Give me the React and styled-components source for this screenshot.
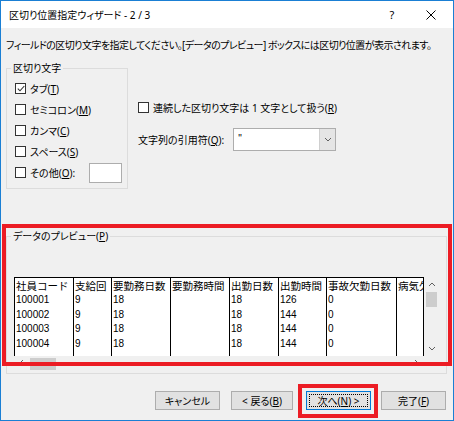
import React from 'react'
import styled, { createGlobalStyle } from 'styled-components'

const UI_FONT = `"Noto Sans", "Noto Sans CJK JP", sans-serif`

const GlobalStyle = createGlobalStyle`
  html, body {
    margin: 0;
    padding: 0;
    background: #f0f0f0;
  }
`

const Window = styled.div`
  width: 454px;
  height: 421px;
  box-sizing: border-box;
  border: 1px solid #1a7fd4;
  background: #f0f0f0;
  display: flex;
  flex-direction: column;
  font-family: ${UI_FONT};
  font-size: 10px;
  font-feature-settings: "palt";
  color: #000;
  overflow: hidden;
`

const TitleBar = styled.div`
  height: 27px;
  background: #fff;
  display: flex;
  align-items: center;
  padding-left: 8px;
  flex-shrink: 0;
`

const Title = styled.div`
  flex: 1;
  font-size: 10px;
`

const TitleButton = styled.div`
  width: ${p => p.w}px;
  height: 27px;
  display: flex;
  align-items: center;
  justify-content: center;
  font-size: 11px;
`

const Content = styled.div`
  padding: 0 5px 0 5px;
  display: flex;
  flex-direction: column;
`

const Instruction = styled.div`
  margin-top: 10px;
  line-height: 14px;
  white-space: nowrap;
  letter-spacing: -0.55px;
`

const TopRow = styled.div`
  display: flex;
  margin-top: 9px;
`

const GroupBox = styled.fieldset`
  margin: 0;
  padding: 0;
  border: 1px solid #dcdcdc;
  min-width: 0;
  box-sizing: border-box;
  width: ${p => p.width}px;
`

const Legend = styled.legend`
  padding: 0 2px;
  margin-left: 4px;
  line-height: 14px;
`

const OptionList = styled.div`
  padding: 3px 0 5px 8px;
  display: flex;
  flex-direction: column;
`

const OptionRow = styled.label`
  height: 21px;
  display: flex;
  align-items: center;
  gap: 4px;
  white-space: nowrap;
`

const Text = styled.span`
  white-space: nowrap;
`

const Box = styled.span`
  width: 9px;
  height: 9px;
  border: 1px solid #333;
  background: #fff;
  display: inline-flex;
  align-items: center;
  justify-content: center;
  flex-shrink: 0;
`

const Key = styled.span`
  text-decoration: underline;
`

const SmallInput = styled.div`
  width: 33px;
  height: 20px;
  box-sizing: border-box;
  border: 1px solid #adadad;
  background: #fff;
  margin-left: auto;
  margin-right: 5px;
`

const RightColumn = styled.div`
  margin-left: 10px;
  padding-top: 36px;
  display: flex;
  flex-direction: column;
`

const QuoteRow = styled.div`
  display: flex;
  align-items: center;
  margin-top: 10px;
  gap: 9px;
  white-space: nowrap;
`

const Combo = styled.div`
  width: 103px;
  height: 23px;
  box-sizing: border-box;
  border: 1px solid #adadad;
  background: #fff;
  display: flex;
`

const ComboValue = styled.div`
  flex: 1;
  padding-left: 4px;
  line-height: 19px;
  font-family: "Liberation Sans", sans-serif;
  font-size: 10px;
`

const ComboButton = styled.div`
  width: 15px;
  background: #e5e5e5;
  border-left: 1px solid #cfcfcf;
  display: flex;
  align-items: center;
  justify-content: center;
`

const PreviewWrap = styled.div`
  position: relative;
  margin-top: 40px;
  margin-right: 1px;
`

const Annotation = styled.div`
  position: absolute;
  left: ${p => p.l}px;
  top: ${p => p.t}px;
  right: ${p => p.r}px;
  bottom: ${p => p.b}px;
  border: 4px solid #ec1c24;
  pointer-events: none;
`

const PreviewControl = styled.div`
  margin: 0 7px 3px 7px;
  padding-top: 34px;
  display: grid;
  grid-template-columns: 410px 15px;
  grid-template-rows: 79px 14px;
`

const Viewport = styled.div`
  box-sizing: border-box;
  background: #fff;
  border-top: 1px solid #000;
  border-right: 1px solid #000;
  overflow: hidden;
  display: flex;
  font-family: "Liberation Sans", "Noto Sans CJK JP", sans-serif;
  font-feature-settings: normal;
`

const Column = styled.div`
  width: ${p => p.w}px;
  flex-shrink: 0;
  box-sizing: border-box;
  border-left: 1px solid #000;
  overflow: hidden;
  white-space: nowrap;
`

const HeaderCell = styled.div`
  height: 15px;
  line-height: 15px;
  font-family: "Noto Sans CJK JP", sans-serif;
  font-size: 10.5px;
  padding-left: 1px;
`

const DataCell = styled.div`
  height: 14.5px;
  line-height: 14.5px;
  font-size: 10px;
  padding-left: 1px;
`

const VScroll = styled.div`
  background: #f0f0f0;
  display: flex;
  flex-direction: column;
`

const ArrowButton = styled.div`
  width: ${p => p.w || 15}px;
  height: ${p => p.h || 15}px;
  display: flex;
  align-items: center;
  justify-content: center;
  flex-shrink: 0;
`

const VThumb = styled.div`
  height: 15px;
  margin: 0 2px;
  background: #cdcdcd;
`

const Spacer = styled.div`
  flex: 1;
`

const HScroll = styled.div`
  background: #f0f0f0;
  display: flex;
  align-items: flex-start;
`

const HThumb = styled.div`
  width: 26px;
  height: 12px;
  margin-top: 2px;
  margin-left: 1px;
  background: #cdcdcd;
`

const Corner = styled.div`
  background: #f0f0f0;
`

const ButtonRow = styled.div`
  display: flex;
  justify-content: flex-end;
  margin-top: 17px;
  margin-right: 2px;
`

const Button = styled.div`
  position: relative;
  width: ${p => p.w || 65}px;
  height: 19px;
  box-sizing: border-box;
  margin-left: ${p => p.gap || 0}px;
  border: 1px solid ${p => (p.primary ? '#0078d7' : '#adadad')};
  background: #e1e1e1;
  display: flex;
  align-items: center;
  justify-content: center;
  white-space: nowrap;
`

const FocusRing = styled.span`
  position: absolute;
  inset: 2px;
  border: 1px dotted #000;
`

const Check = ({ checked }) => (
  <Box>
    {checked && (
      <svg width="8" height="7" viewBox="0 0 8 7">
        <path d="M0.8 3.6 L3 5.8 L7.3 1" fill="none" stroke="#333" strokeWidth="1.1" />
      </svg>
    )}
  </Box>
)

const Chevron = ({ dir = 'down' }) => {
  const paths = {
    down: 'M1 1 L4 4 L7 1',
    up: 'M1 4 L4 1 L7 4',
    left: 'M4 1 L1 4 L4 7',
    right: 'M1 1 L4 4 L1 7',
  }
  const vertical = dir === 'up' || dir === 'down'
  return (
    <svg width={vertical ? 8 : 5} height={vertical ? 5 : 8} viewBox={vertical ? '0 0 8 5' : '0 0 5 8'}>
      <path d={paths[dir]} fill="none" stroke="#606060" strokeWidth="1" />
    </svg>
  )
}

const columns = [
  { w: 59, title: '社員コード', data: ['100001', '100002', '100003', '100004'] },
  { w: 38, title: '支給回', data: ['9', '9', '9', '9'] },
  { w: 59, title: '要勤務日数', data: ['18', '18', '18', '18'] },
  { w: 59, title: '要勤務時間', data: ['', '', '', ''] },
  { w: 49, title: '出勤日数', data: ['18', '18', '18', '18'] },
  { w: 48, title: '出勤時間', data: ['126', '144', '144', '144'] },
  { w: 70, title: '事故欠勤日数', data: ['0', '0', '0', '0'] },
  { w: 70, title: '病気欠勤日数', data: ['', '', '', ''] },
]

export default function App() {
  return (
    <>
      <GlobalStyle />
      <Window>
        <TitleBar>
          <Title>区切り位置指定ウィザード - 2 / 3</Title>
          <TitleButton w={34}>?</TitleButton>
          <TitleButton w={44}>
            <svg width="10" height="10" viewBox="0 0 10 10">
              <path d="M0.5 0.5 L9.5 9.5 M9.5 0.5 L0.5 9.5" stroke="#000" strokeWidth="1" />
            </svg>
          </TitleButton>
        </TitleBar>
        <Content>
          <Instruction>
            フィールドの区切り文字を指定してください。[データのプレビュー] ボックスには区切り位置が表示されます。
          </Instruction>
          <TopRow>
            <GroupBox width={122}>
              <Legend>区切り文字</Legend>
              <OptionList>
                <OptionRow><Check checked /><Text>タブ(<Key>T</Key>)</Text></OptionRow>
                <OptionRow><Check /><Text>セミコロン(<Key>M</Key>)</Text></OptionRow>
                <OptionRow><Check /><Text>カンマ(<Key>C</Key>)</Text></OptionRow>
                <OptionRow><Check /><Text>スペース(<Key>S</Key>)</Text></OptionRow>
                <OptionRow><Check /><Text>その他(<Key>O</Key>):</Text><SmallInput /></OptionRow>
              </OptionList>
            </GroupBox>
            <RightColumn>
              <OptionRow><Check /><Text>連続した区切り文字は 1 文字として扱う(<Key>R</Key>)</Text></OptionRow>
              <QuoteRow>
                <Text>文字列の引用符(<Key>Q</Key>):</Text>
                <Combo>
                  <ComboValue>"</ComboValue>
                  <ComboButton><Chevron dir="down" /></ComboButton>
                </Combo>
              </QuoteRow>
            </RightColumn>
          </TopRow>
          <PreviewWrap>
            <GroupBox width={441}>
              <Legend>データのプレビュー(<Key>P</Key>)</Legend>
              <PreviewControl>
                <Viewport>
                  {columns.map(col => (
                    <Column key={col.title} w={col.w}>
                      <HeaderCell>{col.title}</HeaderCell>
                      {col.data.map((v, i) => (
                        <DataCell key={i}>{v}</DataCell>
                      ))}
                    </Column>
                  ))}
                </Viewport>
                <VScroll>
                  <ArrowButton><Chevron dir="up" /></ArrowButton>
                  <VThumb />
                  <Spacer />
                  <ArrowButton><Chevron dir="down" /></ArrowButton>
                </VScroll>
                <HScroll>
                  <ArrowButton h={14}><Chevron dir="left" /></ArrowButton>
                  <HThumb />
                  <Spacer />
                  <ArrowButton h={14}><Chevron dir="right" /></ArrowButton>
                </HScroll>
                <Corner />
              </PreviewControl>
            </GroupBox>
            <Annotation l={-4} t={-5} r={-5} b={8} />
          </PreviewWrap>
          <ButtonRow>
            <Button><Text>キャンセル</Text></Button>
            <Button w={62} gap={11}><Text>&lt; 戻る(<Key>B</Key>)</Text></Button>
            <Button primary gap={13}>
              <FocusRing />
              <Text>次へ(<Key>N</Key>) &gt;</Text>
              <Annotation l={-9} t={-8} r={-8} b={-9} />
            </Button>
            <Button gap={10}><Text>完了(<Key>F</Key>)</Text></Button>
          </ButtonRow>
        </Content>
      </Window>
    </>
  )
}
